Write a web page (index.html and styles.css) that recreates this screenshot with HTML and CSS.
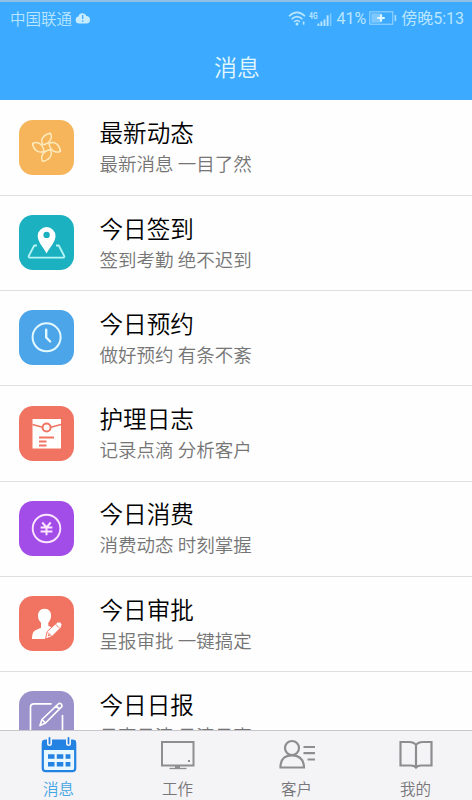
FILE: index.html
```html
<!DOCTYPE html>
<html lang="zh-CN">
<head>
<meta charset="utf-8">
<title>消息</title>
<link rel="stylesheet" href="styles.css">
</head>
<body>
<div class="app">
  <header class="header">
    <div class="status">
      <span class="carrier">中国联通</span>
      <svg class="cloud" width="16" height="12" viewBox="0 0 16 12"><path d="M4 11.5a3.6 3.6 0 0 1-.6-7.1A4.3 4.3 0 0 1 11.5 4 3.8 3.8 0 0 1 12 11.5z" fill="#c8ecff"/><path d="M7.7 3v4M7.7 8.3v1.4" stroke="#3caaff" stroke-width="1.3"/></svg>
      <span class="spacer"></span>
      <svg class="wifi" width="18" height="15" viewBox="0 0 18 15" fill="none" stroke="#b9e6ff" stroke-width="1.6"><path d="M1 5.2Q9-2.6 17 5.2M3.6 8.1q5.4-5 10.8 0M6 10.8q3-2.6 6 0"/><circle cx="9" cy="13" r=".7"/><path d="M15.6 10.5v3.2"/></svg>
      <svg class="signal" width="23" height="17" viewBox="0 0 23 17"><text x="0" y="8.500" class="net" textLength="8.500" lengthAdjust="spacingAndGlyphs">4G</text><path d="M9.4 16v-2.6M12.4 16v-4.4M15.5 16V9.6M18.6 16V5.2" stroke="#b9e6ff" stroke-width="1.9"/><path d="M21.6 16V3.5" stroke="#7cc8ff" stroke-width="1.6"/></svg>
      <span class="percent">41%</span>
      <svg class="battery" width="28" height="14" viewBox="0 0 28 14"><rect x=".8" y=".8" width="23" height="12.4" fill="none" stroke="#96d5ff" stroke-width="1.1"/><path d="M2.3 2.3h9v9.4h-9z" fill="#7cc8ff"/><path d="M12 3.3v7.4M8.2 7h7.6" stroke="#dcf5ff" stroke-width="2.2"/><path d="M26.4 4v6" stroke="#a8deff" stroke-width="1.6"/></svg>
      <span class="time">傍晚5:13</span>
    </div>
    <h1 class="title">消息</h1>
  </header>

  <main class="list">
    <section class="row">
      <svg class="icon orange" viewBox="0 0 55 55" fill="none" stroke="#ffedc2" stroke-width="1.4" stroke-linejoin="round">
        <path id="petal" d="M23.500 24.800C20.800 18.500 25.500 14.200 31.500 13.300C34 18.500 30.500 23.800 23.500 24.800z"/>
        <use href="#petal" transform="rotate(90 27.500 27.300)"/>
        <use href="#petal" transform="rotate(180 27.500 27.300)"/>
        <use href="#petal" transform="rotate(270 27.500 27.300)"/>
      </svg>
      <div class="copy"><h2>最新动态</h2><p>最新消息 一目了然</p></div>
    </section>
    <section class="row">
      <svg class="icon teal" viewBox="0 0 55 55">
        <path d="M18 30.5h-2.8L9.8 41q-.5 1.6 1 1.6h33.4q1.5 0 1-1.6l-5.4-10.5H37" fill="none" stroke="#b5f5f5" stroke-width="1.8" stroke-linejoin="round"/>
        <path fill-rule="evenodd" d="M27.6 38.500C24 32 18.700 26.500 18.700 21a8.900 8.900 0 0 1 17.800 0C36.500 26.500 31.200 32 27.600 38.500zM27.600 16.700a3.200 3.200 0 1 0 0 6.400 3.200 3.200 0 0 0 0-6.400z" fill="#fff"/>
      </svg>
      <div class="copy"><h2>今日签到</h2><p>签到考勤 绝不迟到</p></div>
    </section>
    <section class="row">
      <svg class="icon blue" viewBox="0 0 55 55" fill="none" stroke="#e2f9ff" stroke-linecap="round" stroke-linejoin="round"><circle cx="27.600" cy="27.300" r="14" stroke-width="2"/><path d="M27.200 19.800v7.700l4 4" stroke-width="2.400"/></svg>
      <div class="copy"><h2>今日预约</h2><p>做好预约 有条不紊</p></div>
    </section>
    <section class="row">
      <svg class="icon coral" viewBox="0 0 55 55">
        <path d="M13.500 13h28.500v29.500H13.500z" fill="#fff"/>
        <g fill="none" stroke="#f07461"><path d="M13.500 18.500l10 2.800M32 21.300l10-2.800" stroke-width="1.500"/><circle cx="27.600" cy="21.500" r="4" stroke-width="2"/><path d="M20 31.500h15M20 35.500h7.500M20 39.500h7.500" stroke-width="1.800"/></g>
      </svg>
      <div class="copy"><h2>护理日志</h2><p>记录点滴 分析客户</p></div>
    </section>
    <section class="row">
      <svg class="icon purple" viewBox="0 0 55 55" fill="none" stroke="#ffe6ff"><circle cx="27.500" cy="27.500" r="13.800" stroke-width="1.900"/><path d="M23.300 21.500l4.200 5 4.200-5M27.500 26v8.300M21.600 26.500h11.800M21.600 30.500h11.800" stroke-width="2"/></svg>
      <div class="copy"><h2>今日消费</h2><p>消费动态 时刻掌握</p></div>
    </section>
    <section class="row">
      <svg class="icon coral" viewBox="0 0 55 55" fill="#fff">
        <path d="M25.500 12.800c4.600 0 6.800 3.300 6.600 7.300-.1 3-1.300 4.800-2.800 6.600v3l4.500 2.200-6 6-1 5.100H13c.2-5.500 1-7.500 4-9l5-2.300v-5c-1.800-1.800-2.900-3.600-3-6.600-.1-4 2-7.300 6.500-7.300z"/>
        <path d="M26.500 43l1.700-7.500L38.600 26l2.900 0 1.500 2.500-.5 2.500-9.500 9.500z" stroke="#f07461" stroke-width="1"/><path d="M29 36.500l3.500 3.500M36.700 28.300l3.500 3.500" stroke="#f07461" stroke-width="1"/><circle cx="29.800" cy="39.300" r="1" fill="#f07461"/>
      </svg>
      <div class="copy"><h2>今日审批</h2><p>呈报审批 一键搞定</p></div>
    </section>
    <section class="row">
      <svg class="icon lilac" viewBox="0 0 55 55" fill="none" stroke="#fff" stroke-width="1.700" stroke-linecap="round" stroke-linejoin="round"><path d="M32 12.800H15q-3.500 0-3.500 3.500V40q0 3 3 3h26q3 0 3-3V24.500"/><path d="M21 34.500l2-6L39.800 12.500q3-.8 3.200 2.800L26.500 32zM23 28.500l3.500 3.500M37 15l3.500 3"/></svg>
      <div class="copy"><h2>今日日报</h2><p>日事日清 日清日高</p></div>
    </section>
  </main>

  <nav class="tabs">
    <a class="tab active">
      <svg width="38" height="38" viewBox="0 0 38 38"><rect x="2.800" y="4.600" width="32.400" height="30.600" rx="3" fill="#e9f7ff" stroke="#2482e2" stroke-width="2.200"/><path d="M2 14V6q0-2 2-2h30q2 0 2 2v8z" fill="#2482e2"/><path d="M9.500 2v5.500M28.500 2v5.500" stroke="#f4f3f6" stroke-width="5" stroke-linecap="round"/><path d="M9.500 2v5.500M28.500 2v5.500" stroke="#2482e2" stroke-width="1.800" stroke-linecap="round"/><path d="M8 20.500h23M8 28.200h23" stroke="#2482e2" stroke-width="4.500" stroke-dasharray="6.500 2.300 6.500 2.300 4.800 9"/></svg>
      <span>消息</span>
    </a>
    <a class="tab">
      <svg width="38" height="38" viewBox="0 0 38 38" fill="none" stroke="#8e8e90"><rect x="3" y="6" width="31.500" height="23.500" stroke-width="2"/><path d="M18.500 30v2.500" stroke-width="5"/><path d="M10.500 32.500h17" stroke-width="1.300"/><path d="M29 25h2" stroke-width="2"/></svg>
      <span>工作</span>
    </a>
    <a class="tab">
      <svg width="38" height="38" viewBox="0 0 38 38" fill="none" stroke="#8e8e90" stroke-width="2.200"><circle cx="14" cy="12" r="7"/><path d="M2.500 31.500Q2.500 19.300 14 19.300t12 12.200z"/><path d="M25.500 11h11.500M25.500 17.200h11.500M29.500 23.500h7.500"/></svg>
      <span>客户</span>
    </a>
    <a class="tab">
      <svg width="38" height="38" viewBox="0 0 38 38" fill="none" stroke="#8e8e90" stroke-width="2.200"><path d="M19 9Q17 6 12 6H3.500v23.500H14q3.500 0 5 2 1.500-2 5-2h10.500V6H26q-5 0-7 3zv22"/></svg>
      <span>我的</span>
    </a>
  </nav>
</div>
</body>
</html>
```
FILE: styles.css
```css
* { box-sizing: border-box; }
body {
  margin: 0;
  font-family: "Noto Sans CJK SC", sans-serif;
  background: #fefefe;
}
.app {
  display: flex;
  flex-direction: column;
  width: 472px;
  height: 800px;
  overflow: hidden;
}
.header {
  flex: none;
  height: 100px;
  border-top: 2px solid #8fbfe2;
  background: #3caaff;
  color: #e0f7ff;
}
.status {
  display: flex;
  align-items: center;
  height: 32px;
  padding: 0 8px 0 10px;
  font-size: 15.5px;
  font-weight: 350;
  line-height: 32px;
  color: #b9e6ff;
  white-space: nowrap;
}
.cloud { margin-left: 3px; }
.spacer { flex: 1; }
.signal { margin: 0 4px 0 3px; }
.net { font: 700 9.5px "Roboto", sans-serif; fill: #b9e6ff; }
.percent, .time { padding-top: 1px; font-family: "Roboto", "Noto Sans CJK SC", sans-serif; }
.percent { font-size: 16px; font-weight: 400; }
.battery { margin: 0 4px 0 3px; }
.time { font-size: 16px; font-weight: 400; }
.title {
  margin: 14px 0 0;
  padding-left: 2px;
  font-size: 23px;
  font-weight: 350;
  line-height: 36px;
  text-align: center;
}
.list { flex: 1; min-height: 0; padding-top: 0.6px; overflow: hidden; }
.row {
  display: flex;
  height: 95.25px;
  padding: 19.4px 0 0 19px;
  border-bottom: 1px solid #dedee0;
}
.icon { flex: none; width: 55px; height: 55px; border-radius: 14px; }
.orange { background: #f6b55b; }
.teal { background: #1cb1c0; }
.blue { background: #4ca4e9; }
.coral { background: #f07461; }
.purple { background: #a34de8; }
.lilac { background: #9b91cb; }
.copy { margin-left: 25.5px; }
.copy h2 {
  margin: -4.6px 0 0;
  font-size: 23.6px;
  font-weight: 350;
  line-height: 34px;
  color: #000;
}
.copy p {
  margin: 0;
  font-size: 18.5px;
  font-weight: 350;
  line-height: 28px;
  color: #757575;
}
.tabs {
  flex: none;
  display: grid;
  grid-template-columns: repeat(4, 119px);
  height: 70px;
  margin-left: -1px;
  border-top: 1px solid #c8c6cc;
  background: #f4f3f6;
}
.tab {
  display: flex;
  flex-direction: column;
  align-items: center;
  padding-top: 5px;
  font-size: 15.5px;
  font-weight: 350;
  line-height: 28px;
  color: #77777a;
}
.tab svg { flex: none; }
.active { color: #42a5e3; }
```
